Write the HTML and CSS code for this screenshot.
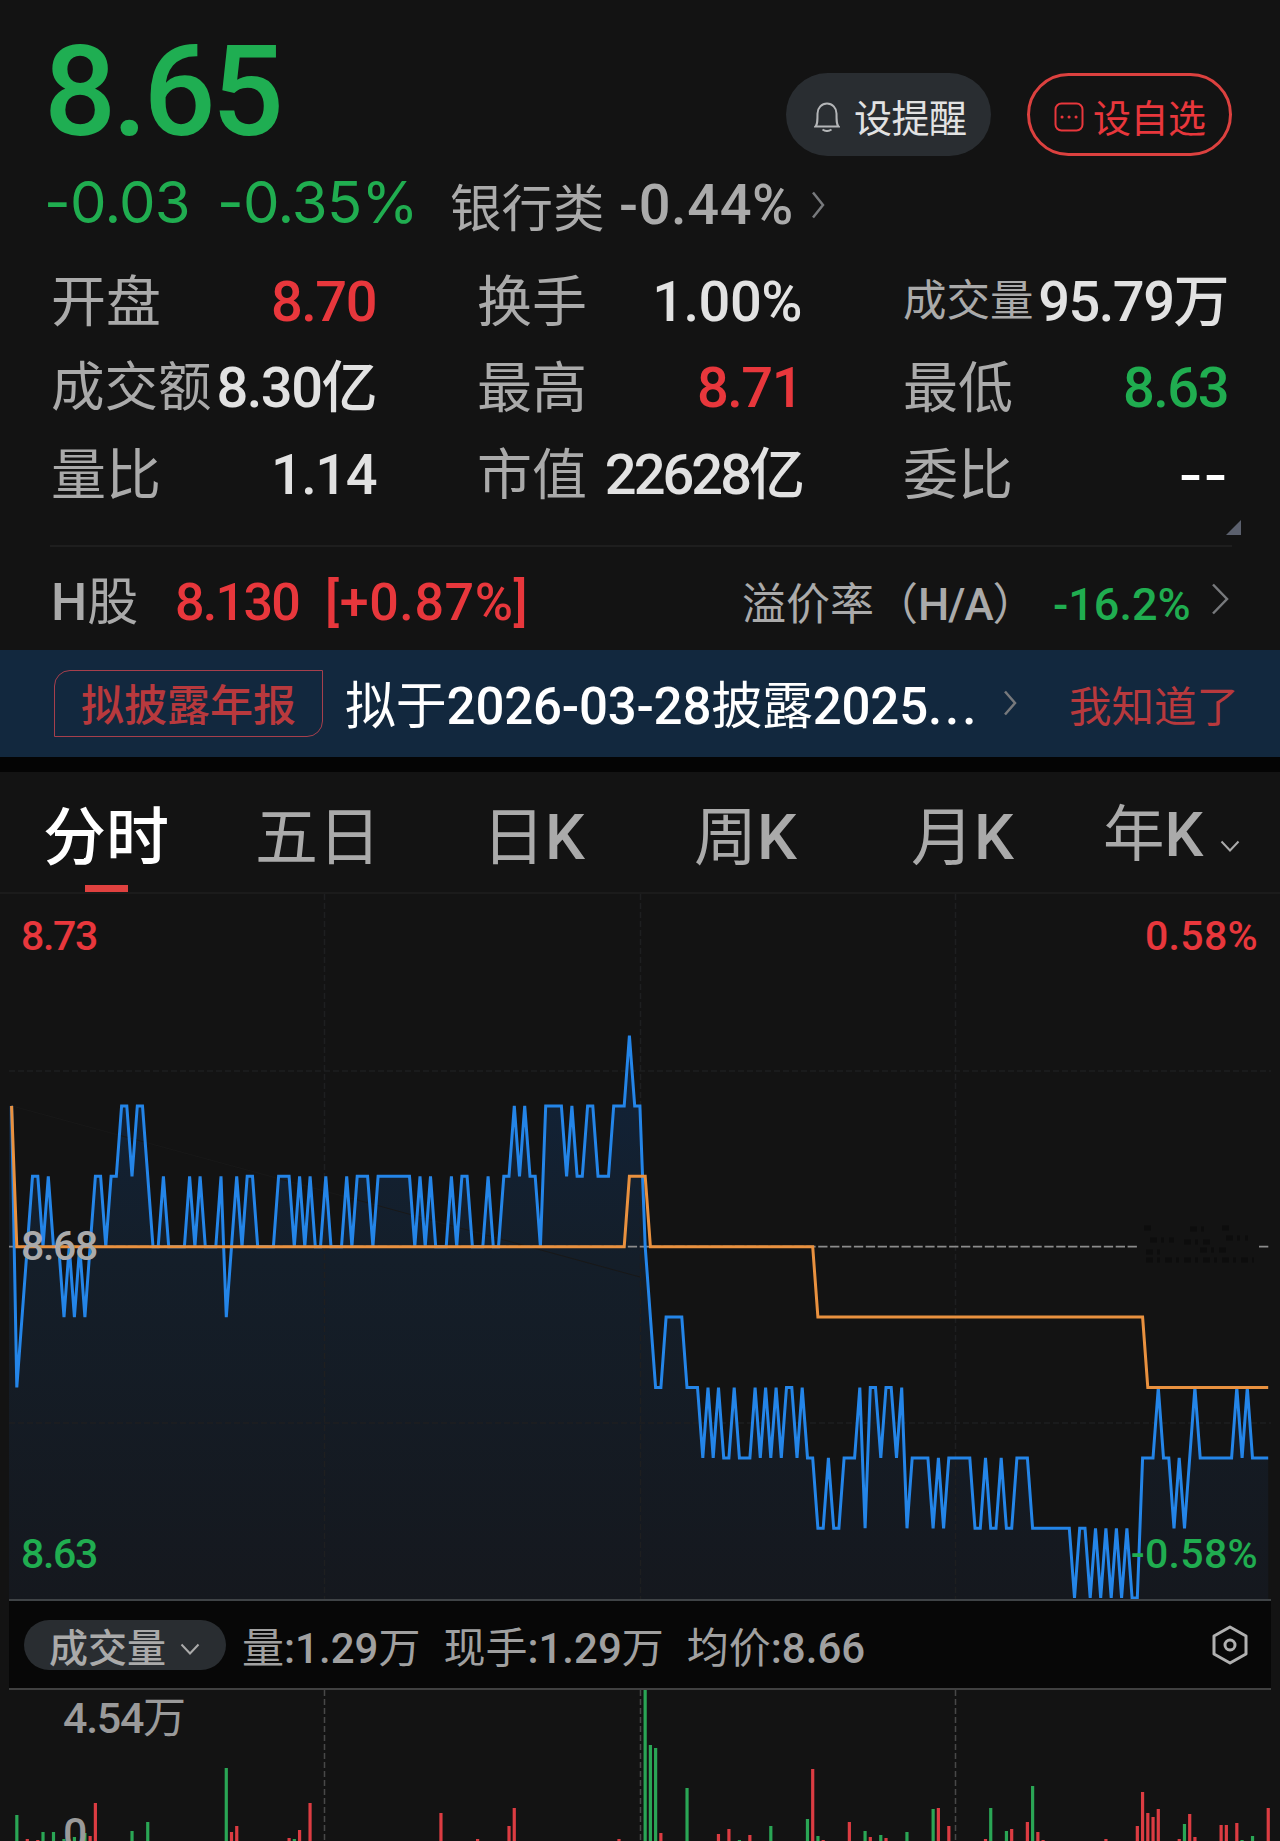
FILE: index.html
```html
<!DOCTYPE html>
<html lang="zh-CN">
  <head>
    <meta charset="UTF-8" />
    <meta name="viewport" content="width=device-width, initial-scale=1.0" />
    <title>分时行情</title>
    <link rel="stylesheet" href="styles.css">
  </head>
  <body>
    <!-- Quote header -->
    <header class="quote">
      <div class="quote-top">
        <div class="price">8.65</div>
        <div class="actions">
          <button class="btn btn-alert">
            <svg class="icon-bell" viewBox="0 0 26 30">
              <path d="M1.500 24.500C3.500 22.500 3.500 19 3.500 11.500a9.500 10 0 0 1 19 0c0 7.500 0 11 2 13ZM8.500 27.500q4.500 3 9 0" />
            </svg>
            设提醒
          </button>
          <button class="btn btn-watch">
            <svg class="icon-more" viewBox="0 0 30 30">
              <rect x="1.500" y="1.500" width="27" height="27" rx="6" />
              <path class="dots" d="M8 15h.1M15 15h.1M22 15h.1" />
            </svg>
            设自选
          </button>
        </div>
      </div>
      <div class="change-row">
        <span class="change down">-0.03</span>
        <span class="change down">-0.35%</span>
        <span class="sector">银行类</span>
        <span class="sector-num">-0.44%</span>
        <svg class="chevron chevron-sector" viewBox="0 0 14 28"><path d="M2 1.500 12 14 2 26.500" /></svg>
      </div>
    </header>

    <section class="stats">
      <div class="stat"><span class="label">开盘</span><span class="value up">8.70</span></div>
      <div class="stat"><span class="label">换手</span><span class="value percent">1.00%</span></div>
      <div class="stat"><span class="label small">成交量</span><span class="value">95.79万</span></div>
      <div class="stat"><span class="label long">成交额</span><span class="value">8.30亿</span></div>
      <div class="stat"><span class="label">最高</span><span class="value up">8.71</span></div>
      <div class="stat"><span class="label">最低</span><span class="value down">8.63</span></div>
      <div class="stat"><span class="label">量比</span><span class="value">1.14</span></div>
      <div class="stat"><span class="label">市值</span><span class="value tight">22628亿</span></div>
      <div class="stat"><span class="label">委比</span><span class="value empty">--</span></div>
    </section>
    <div class="expand"></div>

    <!-- H share -->
    <section class="h-share">
      <span class="h-name"><b>H</b>股</span>
      <span class="h-price up">8.130</span>
      <span class="h-change up">[+0.87%]</span>
      <span class="premium">溢价率（<b>H/A</b>）</span>
      <span class="premium-num down">-16.2%</span>
      <svg class="chevron chevron-h" viewBox="0 0 18 32"><path d="M2 1.500 16 16 2 30.500" /></svg>
    </section>

    <section class="notice">
      <span class="tag">拟披露年报</span>
      <span class="notice-text">拟于<b>2026-03-28</b>披露<b>2025</b><b class="more">...</b></span>
      <svg class="chevron chevron-notice" viewBox="0 0 14 26"><path d="M2 1.500 12 13 2 24.500" /></svg>
      <span class="dismiss">我知道了</span>
    </section>

    <nav class="tabs">
      <a class="tab active">分时</a>
      <a class="tab">五日</a>
      <a class="tab">日<b>K</b></a>
      <a class="tab">周<b>K</b></a>
      <a class="tab">月<b>K</b></a>
      <a class="tab tab-year">年<b>K</b><svg class="arrow" viewBox="0 0 20 12"><path d="M1.500 1.500 10 10.500 18.500 1.500" /></svg></a>
    </nav>

    <!-- Price chart -->
    <section class="chart">
      <svg class="chart-svg" viewBox="0 894 1280 706">
        <defs>
          <linearGradient id="fill" gradientUnits="userSpaceOnUse" x1="0" y1="1035" x2="0" y2="1600">
            <stop offset="0" stop-color="#11233a" />
            <stop offset="0.400" stop-color="#141e29" />
            <stop offset="1" stop-color="#15181e" />
          </linearGradient>
        </defs>
        <polygon id="area" fill="url(#fill)" />
        <path class="grid" d="M9 1071H1271M9 1423H1271M324.500 894V1599M640.500 894V1599M955.500 894V1599" />
        <path class="trend" d="M12 1106 640 1277" />
        <path class="base-line" d="M9 1246.700H1138M1259 1246.700H1269" />
        <path class="smudge" d="M1144 1228h10M1190 1229h14M1222 1228h9M1150 1240h24M1184 1242h30M1226 1238h22M1146 1252h16M1200 1250h26M1146 1260h108" />
        <polyline id="price-line" class="price-line" />
        <polyline id="avg-line" class="avg-line" />
      </svg>
      <span class="axis axis-top up">8.73</span>
      <span class="axis axis-top right up">0.58%</span>
      <span class="axis axis-mid">8.68</span>
      <span class="axis axis-bottom down">8.63</span>
      <span class="axis axis-bottom right down">-0.58%</span>
    </section>

    <section class="volume-bar">
      <button class="pill">成交量<svg class="arrow" viewBox="0 0 20 12"><path d="M1.500 1.500 10 10.500 18.500 1.500" /></svg></button>
      <span>量<b>:1.29</b>万</span>
      <span>现手<b>:1.29</b>万</span>
      <span>均价<b>:8.66</b></span>
      <svg class="icon-settings" viewBox="0 0 36 40">
        <path d="M18 2 34 11V29L18 38 2 29V11Z" />
        <circle cx="18" cy="20" r="5" />
      </svg>
    </section>

    <section class="volume">
      <svg class="volume-svg" viewBox="0 1690 1280 151">
        <path class="volume-grid" d="M324.500 1690V1841M640.500 1690V1841M955.500 1690V1841" />
        <g id="bars"></g>
      </svg>
      <span class="axis axis-vol"><b>4.54</b>万</span>
      <span class="axis axis-zero">0</span>
    </section>

    <script src="chart.js"></script>
  </body>
</html>
```
FILE: styles.css
```css
* {
  margin: 0;
  padding: 0;
  box-sizing: border-box;
}

:root {
  --red: #e8373c;
  --green: #20ad50;
  --grey: #aaaaaa;
  --light: #e2e2e2;
}

body {
  width: 1280px;
  height: 1841px;
  overflow: hidden;
  background: #131313;
  color: var(--grey);
  font-family: Roboto, "Noto Sans CJK SC", sans-serif;
  font-weight: 400;
}

svg {
  display: block;
  fill: none;
  flex: none;
}

button {
  border: none;
  font-family: inherit;
}

b {
  font-weight: 500;
}

.up {
  color: var(--red);
}

.down {
  color: var(--green);
}

/* Quote header */
.quote {
  height: 255px;
}

.quote-top {
  display: flex;
  justify-content: space-between;
  height: 165px;
  padding: 14px 48px 0 44px;
}

.price {
  padding-top: 3px;
  color: #1fae52;
  font-size: 127px;
  font-weight: 500;
  line-height: 150px;
  letter-spacing: -4px;
}

.actions {
  display: flex;
  gap: 36px;
  padding-top: 59px;
}

.btn {
  display: flex;
  align-items: center;
  width: 205px;
  height: 83px;
  padding: 1px 0 0 28px;
  border-radius: 42px;
  font-size: 38px;
  letter-spacing: -0.5px;
}

.btn-alert {
  gap: 14px;
  background: #292d31;
  color: var(--light);
}

.btn-watch {
  gap: 9px;
  padding-left: 24px;
  border: 3px solid #dc413f;
  background: none;
  color: var(--red);
}

.icon-bell {
  width: 26px;
  height: 30px;
  margin-top: 3px;
  stroke: #b4b6b8;
  stroke-width: 2;
}

.icon-more {
  width: 30px;
  height: 30px;
  margin-top: 3px;
  stroke: var(--red);
  stroke-width: 2;
}

.dots {
  stroke-width: 3;
  stroke-linecap: round;
}

.change-row {
  display: flex;
  align-items: center;
  height: 80px;
  padding-left: 44px;
}

.change {
  width: 173px;
  padding-bottom: 7px;
  font-family: Inter, sans-serif;
  font-size: 58px;
  letter-spacing: -0.7px;
  white-space: nowrap;
}

.change + .change {
  width: 233px;
}

.sector {
  width: 169px;
  padding-bottom: 2px;
  font-size: 51.500px;
}

.sector-num {
  width: 192px;
  font-size: 56px;
  font-weight: 500;
  letter-spacing: 0.600px;
}

.chevron {
  stroke: #77797c;
  stroke-width: 2.5;
}

.chevron-sector {
  width: 14px;
  height: 28px;
}

/* Stats grid */
.stats {
  display: grid;
  grid-template-columns: repeat(3, 325px);
  grid-auto-rows: 86.300px;
  column-gap: 101px;
  padding: 4px 0 0 51px;
}

.stat {
  display: flex;
  justify-content: space-between;
  align-items: center;
  white-space: nowrap;
}

.label {
  font-size: 55px;
  line-height: 86px;
}

.label.long {
  font-size: 53.500px;
}

.label.small {
  font-size: 43.500px;
}

.value {
  color: var(--light);
  font-size: 56px;
  font-weight: 500;
  line-height: 86px;
  letter-spacing: -1.500px;
}

.value.up {
  color: var(--red);
}

.value.down {
  color: var(--green);
}

.value.percent {
  letter-spacing: -0.500px;
}

.value.tight {
  letter-spacing: -3px;
}

.value.empty {
  color: #ffffff;
  font-family: Inter, sans-serif;
  font-size: 54px;
  letter-spacing: 0;
}

.expand {
  width: 15px;
  height: 15px;
  margin: 2px 0 10px 1226px;
  background: #5b606d;
  clip-path: polygon(100% 0, 100% 100%, 0 100%);
}

/* H share */
.h-share {
  display: flex;
  align-items: baseline;
  height: 106px;
  margin: 0 48px 0 50px;
  border-top: 2px solid #1e1e1e;
  white-space: nowrap;
}

.h-name {
  width: 124px;
  margin-left: 1px;
  font-size: 51px;
  line-height: 111px;
}

.h-price {
  width: 150px;
  font-size: 52px;
  font-weight: 500;
  letter-spacing: -1.700px;
}

.h-change {
  font-size: 52px;
  font-weight: 500;
  letter-spacing: 0.600px;
}

.premium {
  margin-left: auto;
  width: 311px;
  font-size: 44px;
}

.premium b {
  letter-spacing: -1px;
}

.premium-num {
  width: 158px;
  font-size: 45px;
  font-weight: 500;
}

.chevron-h {
  width: 18px;
  height: 32px;
  margin: 36px 3px 0 0;
  align-self: flex-start;
}

/* Notice */
.notice {
  display: flex;
  align-items: center;
  height: 107px;
  margin-top: -1px;
  padding-left: 54px;
  background: #12283e;
  white-space: nowrap;
}

.tag {
  width: 269px;
  height: 67px;
  border: 1.500px solid #a63f4c;
  border-radius: 16px 0;
  color: #b8393d;
  font-size: 43px;
  font-weight: 500;
  line-height: 71px;
  text-align: center;
}

.notice-text {
  width: 658px;
  margin-left: 22px;
  padding-bottom: 2px;
  color: #ffffff;
  font-size: 51px;
  letter-spacing: -0.200px;
}

.more {
  letter-spacing: 3px;
}

.chevron-notice {
  width: 14px;
  height: 26px;
}

.dismiss {
  margin-left: 52px;
  color: #b8393d;
  font-size: 42.500px;
}

/* Tabs */
.tabs {
  display: grid;
  grid-template-columns: 212px 227px 212px 217px 192px 1fr;
  height: 137px;
  padding: 0 0 0 43px;
  border-top: 15px solid #040404;
  border-bottom: 2px solid #1b1b1b;
}

.tab {
  position: relative;
  padding-top: 3px;
  font-size: 63px;
  line-height: 125px;
}

.tab.active {
  color: #ffffff;
  font-weight: 500;
}

.tab.active::after {
  content: "";
  position: absolute;
  left: 42px;
  top: 113px;
  width: 43px;
  height: 7px;
  background: #e0413f;
}

.tab-year {
  display: flex;
  padding-top: 1px;
  font-size: 61.500px;
}

.arrow {
  width: 20px;
  height: 12px;
  stroke: var(--grey);
  stroke-width: 2;
}

.tab-year .arrow {
  margin: 67px 0 0 17px;
}

/* Price chart */
.chart {
  position: relative;
  height: 706px;
}

.chart-svg {
  width: 1280px;
  height: 706px;
}

.grid {
  stroke: #1e1f20;
  stroke-width: 1.500;
  stroke-dasharray: 6 3;
}

.trend {
  stroke: #181818;
}

.base-line {
  stroke: #8c8c8c;
  stroke-width: 1.800;
  stroke-dasharray: 9.300 2.600;
}

.smudge {
  stroke: #0d0d0d;
  stroke-width: 5;
  stroke-dasharray: 7 4 3 5;
}

.price-line {
  stroke: #2485e8;
  stroke-width: 3;
}

.avg-line {
  stroke: #e9913f;
  stroke-width: 3;
}

.axis {
  position: absolute;
  left: 21px;
  font-size: 41px;
  font-weight: 500;
  line-height: 48px;
  letter-spacing: -1.300px;
}

.axis.right {
  left: auto;
  right: 22px;
  letter-spacing: 0.300px;
}

.axis-top {
  top: 18px;
}

.axis-mid {
  top: 328px;
}

.axis-bottom {
  top: 636px;
}

/* Volume */
.volume-bar {
  display: flex;
  align-items: center;
  height: 91px;
  margin: -1px 9px 0;
  padding-left: 15px;
  border-top: 2px solid #3f4346;
  border-bottom: 2px solid #404040;
  background: #070707;
  position: relative;
  color: #a0a0a0;
  font-size: 42px;
  white-space: nowrap;
}

.volume-bar span {
  margin-right: 23px;
}

.pill {
  display: flex;
  align-items: center;
  width: 202px;
  height: 50px;
  margin: 2px 16px 0 0;
  padding-left: 25px;
  border-radius: 25px;
  background: #292d31;
  color: var(--grey);
  font-size: 39px;
  font-weight: 500;
}

.pill .arrow {
  margin: 8px 0 0 14px;
}

.icon-settings {
  width: 36px;
  height: 40px;
  margin: 1px 23px 0 auto;
  stroke: #b0b0b0;
  stroke-width: 3;
  stroke-linejoin: round;
}

.volume {
  position: relative;
  height: 151px;
  overflow: hidden;
}

.volume-svg {
  width: 1280px;
  height: 151px;
}

.volume-grid {
  stroke: #484848;
  stroke-width: 1.500;
  stroke-dasharray: 6 3;
}

.axis-vol {
  left: 63px;
  top: 4px;
  color: #9a9a9a;
  font-size: 43px;
  font-weight: 400;
}

.axis-zero {
  left: 63px;
  top: 119px;
  color: #9a9a9a;
  font-size: 43px;
}
```
FILE: chart.js
```js
const LEFT = 11.6;
const STEP = 5.236;
const BASE_Y = 1246.7;
const TICK = 70.4;

// [minute, ticks above or below the previous close]
const price = [
  [0,2],[1,-2],[4,1],[5,1],[6,0],[7,1],[8,0],[9,0],[10,-1],[11,0],[12,-1],[13,0],[14,-1],[15,0],[16,1],[17,1],
  [18,0],[19,1],[20,1],[21,2],[22,2],[23,1],[24,2],[25,2],[27,0],[28,0],[29,1],[30,0],[33,0],[34,1],[35,0],
  [36,1],[37,0],[39,0],[40,1],[41,-1],[42,0],[43,1],[44,0],[45,1],[46,1],[47,0],[50,0],[51,1],[53,1],[54,0],
  [55,1],[56,0],[57,1],[58,0],[59,0],[60,1],[61,0],[63,0],[64,1],[65,0],[66,1],[68,1],[69,0],[70,1],[76,1],
  [77,0],[78,1],[79,0],[80,1],[81,0],[83,0],[84,1],[85,0],[86,1],[87,1],[88,0],[90,0],[91,1],[92,0],[93,0],
  [94,1],[95,1],[96,2],[97,1],[98,2],[99,1],[100,1],[101,0],[102,2],[105,2],[106,1],[107,2],[108,1],[109,1],
  [110,2],[111,2],[112,1],[114,1],[115,2],[117,2],[118,3],[119,2],[120,2],[121,0],[123,-2],[124,-2],[125,-1],
  [128,-1],[129,-2],[131,-2],[132,-3],[133,-2],[134,-3],[135,-2],[136,-3],[137,-3],[138,-2],[139,-3],[141,-3],
  [142,-2],[143,-3],[144,-2],[145,-3],[146,-2],[147,-3],[148,-2],[149,-2],[150,-3],[151,-2],[152,-3],[153,-3],
  [154,-4],[155,-4],[156,-3],[157,-4],[158,-4],[159,-3],[161,-3],[162,-2],[163,-4],[164,-2],[165,-2],[166,-3],
  [167,-2],[168,-2],[169,-3],[170,-2],[171,-4],[172,-3],[175,-3],[176,-4],[177,-3],[178,-4],[179,-3],[183,-3],
  [184,-4],[185,-4],[186,-3],[187,-4],[188,-4],[189,-3],[190,-4],[191,-4],[192,-3],[194,-3],[195,-4],[202,-4],
  [203,-5],[204,-4],[205,-4],[206,-5],[207,-4],[208,-5],[209,-4],[210,-5],[211,-4],[212,-5],[213,-4],[214,-5],
  [215,-5],[216,-3],[218,-3],[219,-2],[220,-3],[221,-3],[222,-4],[223,-3],[224,-4],[226,-2],[227,-3],[233,-3],
  [234,-2],[235,-3],[236,-2],[237,-3],[240,-3]
];

const average = [
  [0,2],[1,0],[117,0],[118,1],[121,1],[122,0],[153,0],[154,-1],[216,-1],[217,-2],[240,-2]
];

// minute: visible height
const greenBars = {
  1:26, 6:9, 8:9, 10:2, 12:4, 14:8, 23:10, 26:19, 41:73, 54:2, 121:152, 122:96, 123:93, 129:53, 139:1,
  145:15, 152:22, 154:5, 163:10, 166:6, 171:9, 176:32, 187:33, 190:10, 195:55, 224:17, 235:1, 237:5
};
const redBars = {
  3:2, 5:1, 15:5, 16:38, 42:9, 43:15, 53:3, 55:11, 57:38, 82:28, 89:2, 95:15, 96:33, 116:2, 124:8, 135:7,
  137:12, 141:6, 153:72, 155:1, 160:19, 164:4, 167:3, 177:33, 179:15, 186:2, 191:12, 194:19, 196:9, 197:1,
  209:2, 215:15, 216:49, 217:28, 218:24, 219:32, 223:2, 225:27, 226:4, 231:16, 232:16, 234:18, 240:33
};

function x(i) {
  return LEFT + i * STEP;
}

function toPoints(series) {
  return series.map(([i, t]) => {
    const y = Math.min(BASE_Y - t * TICK, 1598);
    return `${x(i).toFixed(1)},${y.toFixed(1)}`;
  }).join(" ");
}

function drawBars(bars, color) {
  const group = document.getElementById("bars");
  for (const i in bars) {
    const rect = document.createElementNS("http://www.w3.org/2000/svg", "rect");
    rect.setAttribute("x", x(Number(i)) - 1.6);
    rect.setAttribute("y", 1841 - bars[i]);
    rect.setAttribute("width", 3.2);
    rect.setAttribute("height", bars[i]);
    rect.setAttribute("fill", color);
    group.appendChild(rect);
  }
}

const points = toPoints(price);
document.getElementById("price-line").setAttribute("points", points);
document.getElementById("area").setAttribute("points", `9,1600 9,1106 ${points} ${x(240)},1600`);
document.getElementById("avg-line").setAttribute("points", toPoints(average));
drawBars(greenBars, "#2aa655");
drawBars(redBars, "#dc3c42");
```
